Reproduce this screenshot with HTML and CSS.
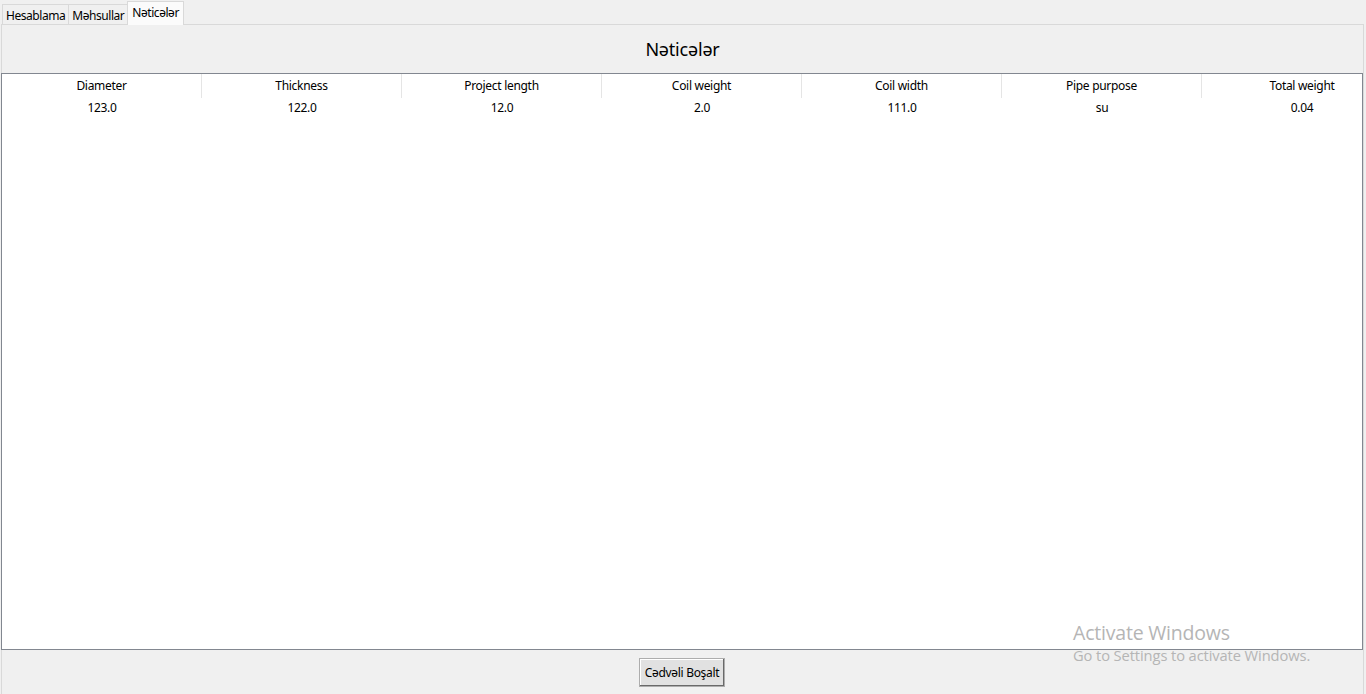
FILE: index.html
```html
<!DOCTYPE html>
<html>
<head>
<meta charset="utf-8">
<link rel="stylesheet" href="styles.css">
</head>
<body>
<div class="window">
  <div class="tabs">
    <div class="tab">Hesablama</div>
    <div class="tab">Məhsullar</div>
    <div class="tab active">Nəticələr</div>
  </div>
  <div class="panel">
    <h1 class="title">Nəticələr</h1>
    <div class="table">
      <div class="row head">
        <div class="cell">Diameter</div>
        <div class="cell">Thickness</div>
        <div class="cell">Project length</div>
        <div class="cell">Coil weight</div>
        <div class="cell">Coil width</div>
        <div class="cell">Pipe purpose</div>
        <div class="cell">Total weight</div>
      </div>
      <div class="row data">
        <div class="cell">123.0</div>
        <div class="cell">122.0</div>
        <div class="cell">12.0</div>
        <div class="cell">2.0</div>
        <div class="cell">111.0</div>
        <div class="cell">su</div>
        <div class="cell">0.04</div>
      </div>
    </div>
    <div class="footer">
      <button class="btn">Cədvəli Boşalt</button>
    </div>
  </div>
</div>
<div class="watermark">
  <div class="wm1">Activate Windows</div>
  <div class="wm2">Go to Settings to activate Windows.</div>
</div>
</body>
</html>
```
FILE: styles.css
```css
html, body {
  margin: 0;
  padding: 0;
  width: 1366px;
  height: 694px;
  overflow: hidden;
  background: #f0f0f0;
  font-family: "Noto Sans", "Open Sans", sans-serif;
  font-size: 12px;
  color: #000;
}
.window {
  display: flex;
  flex-direction: column;
  height: 694px;
  padding: 0 2px 0 1px;
  box-sizing: border-box;
}
.tabs {
  display: flex;
  align-items: flex-end;
  height: 24px;
  padding-left: 1px;
}
.tab {
  height: 20px;
  line-height: 21px;
  padding: 0 3px;
  border: 1px solid #d9d9d9;
  border-bottom: none;
  margin-right: -1px;
  background: #f0f0f0;
  font-size: 12px;
  letter-spacing: -0.45px;
  box-sizing: border-box;
}
.tab.active {
  background: #fbfbfb;
  position: relative;
  z-index: 1;
  margin-bottom: -1px;
  height: 24px;
  line-height: 22px;
  padding: 0 4px;
}
.panel {
  flex: 1;
  display: flex;
  flex-direction: column;
  border: 1px solid #d9d9d9;
  border-bottom: none;
  padding: 0;
}
.title {
  margin: 0;
  height: 48px;
  line-height: 48px;
  font-size: 18px;
  font-weight: normal;
  text-align: center;
  letter-spacing: -0.2px;
}
.table {
  height: 577px;
  box-sizing: border-box;
  border: 1px solid #828790;
  background: #fff;
  margin-left: -1px;
}
.row {
  display: grid;
  grid-template-columns: repeat(7, 200px);
}
.head .cell {
  height: 24px;
  line-height: 24px;
  border-right: 1px solid #e5e5e5;
  text-align: center;
  box-sizing: border-box;
}
.head .cell:last-child {
  border-right: none;
}
.data .cell {
  height: 20px;
  line-height: 19px;
  text-align: center;
}
.cell {
  letter-spacing: -0.3px;
}
.footer {
  flex: 1;
  display: flex;
  justify-content: center;
  align-items: flex-start;
  padding-top: 8px;
}
.btn {
  width: 86px;
  height: 29px;
  font-family: "Noto Sans", "Open Sans", sans-serif;
  font-size: 12px;
  letter-spacing: -0.3px;
  background: #e1e1e1;
  border: 1px solid #adadad;
  box-shadow: inset -1px -1px 0 #696969, inset 1px 1px 0 #fff;
  padding: 0;
  color: #000;
  margin-left: -1px;
}
.watermark {
  position: absolute;
  left: 1073px;
  top: 620px;
  color: #b5b5b5;
  font-family: "Open Sans", "Noto Sans", sans-serif;
  pointer-events: none;
}
.wm1 {
  font-size: 19.5px;
  line-height: 26px;
  letter-spacing: -0.2px;
}
.wm2 {
  font-size: 14.7px;
  line-height: 19px;
  letter-spacing: -0.1px;
}
```
